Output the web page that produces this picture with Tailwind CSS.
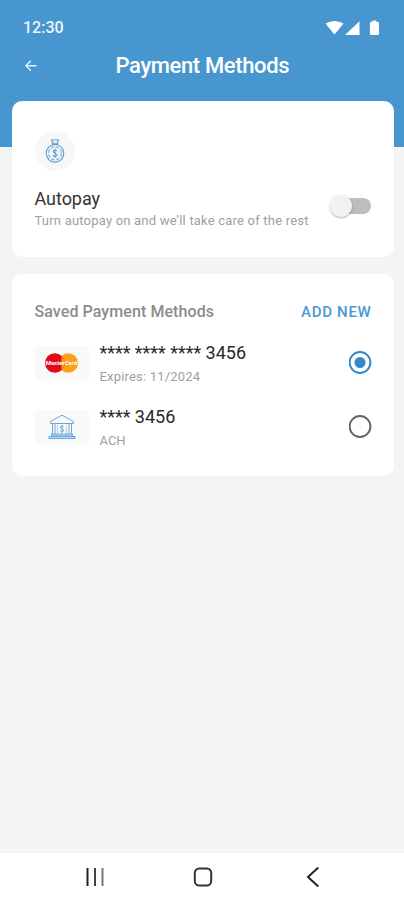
<!DOCTYPE html>
<html lang="en">
<head>
<meta charset="utf-8">
<title>Payment Methods</title>
<script src="https://cdn.jsdelivr.net/npm/@tailwindcss/browser@4"></script>
</head>
<body class="bg-[#f2f4f6] font-['Roboto',sans-serif]">
<div class="flex h-[900px] w-[404px] flex-col overflow-hidden">
  <header class="h-[147px] shrink-0 bg-[#4796d0] text-white">
    <div class="flex h-[40px] items-end justify-between pr-[23px] pl-[23px]">
      <span class="mb-[2px] text-[16px] leading-[20px] font-medium text-[#eef6fc]">12:30</span>
      <svg class="mb-[3px]" width="56" height="17" viewBox="0 0 56 17" fill="currentColor">
        <path d="M0.500 3.600Q9.500 -1.600 18.500 3.600L9.500 14.500Z"/>
        <path d="M34.500 1.200V15H20Z"/>
        <path d="M46.200 1.800h1.500V0.500h3.500v1.300h1.500q1.300 0 1.300 1.300v10.600q0 1.300-1.300 1.300h-6.500q-1.300 0-1.300-1.300V3.100q0-1.300 1.300-1.300z"/>
      </svg>
    </div>
    <div class="grid h-[52px] grid-cols-[115.500px_1fr] items-center">
      <svg class="ml-[25px]" width="12" height="12" viewBox="0 0 12 12" fill="none" stroke="#e6f1fa" stroke-width="1.400"><path d="M5.800 0.700L0.900 5.700L5.800 10.700M1 5.700H11.700"/></svg>
      <h1 class="text-[22px] leading-[26px] font-medium tracking-[-0.370px] whitespace-nowrap">Payment Methods</h1>
    </div>
  </header>

  <main class="-mt-[46px] flex flex-1 flex-col gap-[17px] pr-[10px] pl-[12px]">
    <section class="h-[156px] rounded-[10px] bg-white pt-[30px] pr-[23px] pl-[22.500px]">
      <div class="flex h-[40px] w-[40px] items-center justify-center rounded-full bg-[#f5f7f8]">
        <svg width="20" height="24" viewBox="0 0 20 24" fill="none" stroke="#5b9fd8" stroke-width="1.100">
          <path d="M6.500 1h7l-1.300 3.300H7.800zM7.500 4.300h5v1.500h-5z"/>
          <circle cx="10" cy="14.300" r="8.800"/>
          <circle cx="10" cy="14.300" r="6.500" stroke="#8bbbe4" stroke-width="1.400" stroke-dasharray="3.600 1.500"/>
          <path d="M12 12.300C11.700 10.500 8.300 10.500 8.300 12.400C8.300 14.300 12 14 12 16.100C12 18.100 8.300 18 8 16.200M10.100 9.700V19"/>
        </svg>
      </div>
      <div class="mt-[17px] flex items-start justify-between">
        <div>
          <h2 class="text-[18px] leading-[22px] tracking-[-0.050px] text-[#333]">Autopay</h2>
          <p class="mt-[3px] text-[13px] leading-[16px] tracking-[0.200px] whitespace-nowrap text-[#a0a0a0]">Turn autopay on and we’ll take care of the rest</p>
        </div>
        <div class="mt-[10px] flex h-[16px] w-[37px] items-center rounded-full bg-[#bdbdbd]">
          <span class="-ml-[4px] h-[22px] w-[22px] shrink-0 rounded-full bg-[#f2f2f2] shadow-[0_1px_2px_rgba(0,0,0,0.3)]"></span>
        </div>
      </div>
    </section>

    <section class="h-[202px] rounded-[10px] bg-white pt-[28px] pr-[22.500px] pl-[22.500px]">
      <div class="flex h-[20px] items-center justify-between">
        <h2 class="text-[16px] leading-[20px] font-medium tracking-[0.080px] text-[#8c8c8c]">Saved Payment Methods</h2>
        <button class="text-[15px] leading-[20px] font-medium tracking-[0.700px] text-[#4a98d4]">ADD NEW</button>
      </div>
      <div class="mt-[19px] flex flex-col gap-[20px]">
        <div class="flex h-[44px] items-center">
          <div class="flex h-[35px] w-[54px] items-center justify-center rounded-[4px] bg-[#f8f9f9]">
            <svg class="overflow-visible" width="34" height="20" viewBox="0 0 34 20">
              <circle cx="23.200" cy="10" r="9.800" fill="#f9a11b"/>
              <circle cx="9.800" cy="10" r="9.800" fill="#e20a17"/>
              <path d="M16.500 2.900A9.800 9.800 0 0 1 16.500 17.100" fill="#f9a11b"/>
              <text x="16.500" y="12.300" text-anchor="middle" font-family="Roboto" font-size="6" font-weight="700" fill="#fff">MasterCard</text>
            </svg>
          </div>
          <div class="ml-[11px] flex-1">
            <p class="text-[18px] leading-[22px] tracking-[-0.020px] text-[#292929]">**** **** **** 3456</p>
            <p class="mt-[5px] -mb-px text-[13px] leading-[16px] tracking-[0.180px] text-[#a0a0a0]">Expires: 11/2024</p>
          </div>
          <svg class="mb-px" width="23" height="23" viewBox="0 0 23 23" fill="none" stroke="#3489cc" stroke-width="2"><circle cx="11" cy="11.500" r="10.400"/><circle cx="11" cy="11.500" r="5.500" fill="#3489cc" stroke="none"/></svg>
        </div>
        <div class="flex h-[44px] items-center">
          <div class="flex h-[35px] w-[54px] items-center justify-center rounded-[4px] bg-[#f8f9f9]">
            <svg width="28" height="26" viewBox="0 0 28 26" fill="none" stroke="#6ba8db" stroke-width="1">
              <path d="M2.500 7.500L14 1.200L25.500 7.500V9.500H2.500z"/>
              <path d="M4.500 9.500V20M7 9.500V20M21 9.500V20M23.500 9.500V20"/>
              <path d="M9.500 11.500V20M18.500 11.500V20" stroke="#b5d3ec"/>
              <path d="M3.500 20h21v2h-21zM1 22.500h26v2H1z" fill="#bdd8ef"/>
              <path d="M15.700 12.800C15 11.500 12.500 11.700 12.500 13.300C12.500 15 15.700 14.600 15.700 16.500C15.700 18.200 12.800 18.200 12.300 17M14 11V19"/>
            </svg>
          </div>
          <div class="ml-[11px] flex-1">
            <p class="text-[18px] leading-[22px] tracking-[-0.020px] text-[#292929]">**** 3456</p>
            <p class="mt-[5px] -mb-px text-[13px] leading-[16px] text-[#a0a0a0]">ACH</p>
          </div>
          <svg class="mb-px" width="23" height="23" viewBox="0 0 23 23" fill="none" stroke="#666" stroke-width="2"><circle cx="11" cy="11.500" r="10.400"/></svg>
        </div>
      </div>
    </section>
  </main>

  <nav class="flex h-[47px] shrink-0 items-center bg-white pl-[85px] text-[#222]">
    <svg width="20" height="20" viewBox="0 0 20 20" stroke="currentColor" stroke-width="2"><path d="M2.500 1V19"/><path d="M10 1V19" stroke="#444"/><path d="M17.500 1V19" stroke="#777"/></svg>
    <svg class="ml-[88px]" width="20" height="20" viewBox="0 0 20 20" fill="none" stroke="#333" stroke-width="2"><rect x="1.800" y="1.500" width="16.400" height="17" rx="4.500"/></svg>
    <svg class="ml-[93px]" width="14" height="22" viewBox="0 0 14 22" fill="none" stroke="currentColor" stroke-width="2"><path d="M12.300 1.500L2 11L12.300 20.500"/></svg>
  </nav>
</div>
</body>
</html>
